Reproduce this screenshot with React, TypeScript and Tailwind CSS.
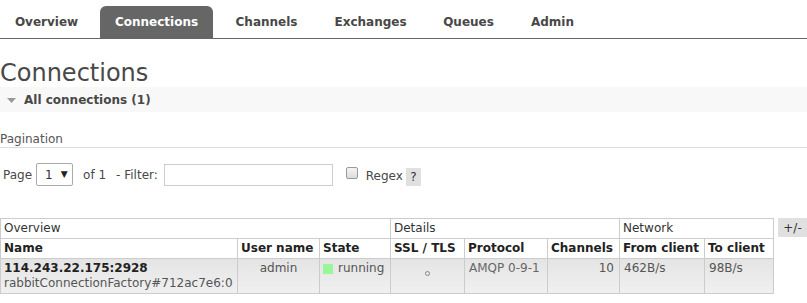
import React from "react";

const tabs = [
  { label: "Overview", w: "w-[93px]" },
  { label: "Connections", w: "w-[113px]", active: true },
  { label: "Channels", w: "w-[93px]" },
  { label: "Exchanges", w: "w-[101px]" },
  { label: "Queues", w: "w-[81px]" },
  { label: "Admin", w: "w-[73px]" },
];

export default function App() {
  return (
    <div className="w-[807px] h-[303px] overflow-hidden bg-white font-['DejaVu_Sans',Verdana,sans-serif] text-[12px] text-[#484848]">
      {/* Top navigation */}
      <div className="flex items-end pt-[6px] border-b border-[#666]">
        {tabs.map((t) => (
          <div
            key={t.label}
            className={
              t.active
                ? `${t.w} mr-[7px] h-[32px] flex items-center justify-center rounded-t-[6px] bg-[#666] text-white font-bold`
                : `${t.w} mr-[7px] h-[32px] flex items-center justify-center text-[#484848] font-bold`
            }
          >
            {t.label}
          </div>
        ))}
      </div>

      {/* Title */}
      <h1 className="mt-[21px] text-[24px] leading-[27px] text-[#484848] font-normal">Connections</h1>

      {/* Section header */}
      <div className="h-[25px] bg-[#f8f8f8] flex items-center">
        <svg width="9" height="5" viewBox="0 0 9 5" className="ml-[7px] mt-[1px]">
          <polygon points="0,0 9,0 4.5,5" fill="#999" />
        </svg>
        <span className="ml-[8px] font-bold text-[#484848]">All connections (1)</span>
      </div>

      {/* Pagination */}
      <div className="mt-[20px] pb-[1px] leading-[14px] border-b border-[#ddd] text-[#555]">Pagination</div>

      <div className="mt-[15px] flex items-center h-[23px] text-[#484848]">
        <span className="ml-[3px]">Page</span>
        <div className="ml-[4px] w-[37px] h-[23px] border border-[#aaa] rounded-[2px] flex items-center">
          <span className="ml-[8px] text-[#333]">1</span>
          <span className="ml-[8px] text-[9px] text-[#222]">▼</span>
        </div>
        <span className="ml-[10px]">of 1</span>
        <span className="ml-[10px]">- Filter:</span>
        <div className="ml-[6px] w-[169px] h-[22px] border border-[#ccc] bg-white" />
        <div className="ml-[13px] w-[12px] h-[12px] rounded-[2px] border border-[#999] bg-[linear-gradient(#f4f4f4,#dcdcdc)] mb-[3px]" />
        <span className="ml-[8px] mt-[2px]">Regex</span>
        <div className="ml-[3px] mt-[4px] w-[15px] h-[18px] bg-[#e0e0e0] flex items-center justify-center text-[#333]">?</div>
      </div>

      {/* Table */}
      <div className="mt-[32px] flex items-start">
        <div className="grid grid-cols-[237px_82px_71px_74px_83px_72px_85px_69px] border-l border-t border-[#ccc] leading-[15px]">
          {/* group row */}
          <div className="col-span-3 border-r border-b border-[#ccc] px-[3px] py-[2px] text-[#333]">Overview</div>
          <div className="col-span-3 border-r border-b border-[#ccc] px-[3px] py-[2px] text-[#333]">Details</div>
          <div className="col-span-2 border-r border-b border-[#ccc] px-[3px] py-[2px] text-[#333]">Network</div>

          {/* header row */}
          {["Name", "User name", "State", "SSL / TLS", "Protocol", "Channels", "From client", "To client"].map((h) => (
            <div key={h} className="border-r border-b border-[#ccc] px-[3px] py-[2px] font-bold text-[#222] whitespace-nowrap overflow-hidden">
              {h}
            </div>
          ))}

          {/* data row */}
          <div className="border-r border-b border-[#ccc] px-[3px] py-[2px] bg-[linear-gradient(#e4e4e4,#f0f0f0)]">
            <div className="font-bold text-[#222] whitespace-nowrap">114.243.22.175:2928</div>
            <div className="text-[#555] whitespace-nowrap">rabbitConnectionFactory#712ac7e6:0</div>
          </div>
          <div className="border-r border-b border-[#ccc] px-[3px] py-[2px] bg-[linear-gradient(#e4e4e4,#f0f0f0)] text-center text-[#555]">admin</div>
          <div className="border-r border-b border-[#ccc] px-[3px] py-[2px] bg-[linear-gradient(#e4e4e4,#f0f0f0)] text-[#555] flex items-start">
            <span className="mt-[3px] w-[10px] h-[10px] bg-[#98f898] shrink-0" />
            <span className="ml-[5px]">running</span>
          </div>
          <div className="border-r border-b border-[#ccc] px-[3px] py-[2px] bg-[linear-gradient(#e4e4e4,#f0f0f0)] flex justify-center">
            <span className="mt-[10px] w-[5px] h-[5px] rounded-full border border-[#888]" />
          </div>
          <div className="border-r border-b border-[#ccc] px-[4px] py-[2px] bg-[linear-gradient(#e4e4e4,#f0f0f0)] text-[#666] whitespace-nowrap">AMQP 0-9-1</div>
          <div className="border-r border-b border-[#ccc] pr-[5px] pl-[3px] py-[2px] bg-[linear-gradient(#e4e4e4,#f0f0f0)] text-right text-[#555]">10</div>
          <div className="border-r border-b border-[#ccc] px-[4px] py-[2px] bg-[linear-gradient(#e4e4e4,#f0f0f0)] text-[#555]">462B/s</div>
          <div className="border-r border-b border-[#ccc] px-[4px] py-[2px] bg-[linear-gradient(#e4e4e4,#f0f0f0)] text-[#555]">98B/s</div>
        </div>

        <div className="ml-[4px] w-[30px] h-[19px] bg-[#e0e0e0] flex items-center justify-center text-[#333]">+/-</div>
      </div>
    </div>
  );
}
